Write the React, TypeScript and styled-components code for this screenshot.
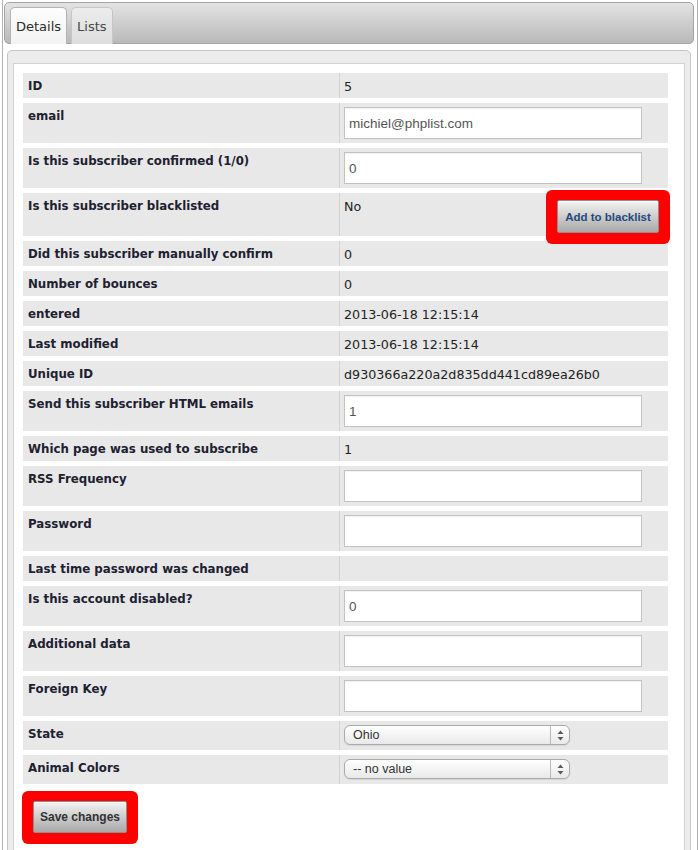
import { styled, createGlobalStyle } from "styled-components"

type Kind = "text" | "input" | "select" | "blacklist"

interface Field {
  label: string
  kind: Kind
  value: string
}

const fields: Field[] = [
  { label: "ID", kind: "text", value: "5" },
  { label: "email", kind: "input", value: "michiel@phplist.com" },
  { label: "Is this subscriber confirmed (1/0)", kind: "input", value: "0" },
  { label: "Is this subscriber blacklisted", kind: "blacklist", value: "No" },
  { label: "Did this subscriber manually confirm", kind: "text", value: "0" },
  { label: "Number of bounces", kind: "text", value: "0" },
  { label: "entered", kind: "text", value: "2013-06-18 12:15:14" },
  { label: "Last modified", kind: "text", value: "2013-06-18 12:15:14" },
  { label: "Unique ID", kind: "text", value: "d930366a220a2d835dd441cd89ea26b0" },
  { label: "Send this subscriber HTML emails", kind: "input", value: "1" },
  { label: "Which page was used to subscribe", kind: "text", value: "1" },
  { label: "RSS Frequency", kind: "input", value: "" },
  { label: "Password", kind: "input", value: "" },
  { label: "Last time password was changed", kind: "text", value: "" },
  { label: "Is this account disabled?", kind: "input", value: "0" },
  { label: "Additional data", kind: "input", value: "" },
  { label: "Foreign Key", kind: "input", value: "" },
  { label: "State", kind: "select", value: "Ohio" },
  { label: "Animal Colors", kind: "select", value: "-- no value" }
]

function SelectArrows() {
  return (
    <svg width="7" height="11" viewBox="0 0 7 11">
      <polygon points="3.5,0.5 6.5,4 0.5,4" fill="#5a5a5a" />
      <polygon points="0.5,7 6.5,7 3.5,10.5" fill="#5a5a5a" />
    </svg>
  )
}

function renderValue(field: Field) {
  switch (field.kind) {
    case "input":
      return (
        <Value $kind="input">
          <TextInput defaultValue={field.value} />
        </Value>
      )
    case "select":
      return (
        <Value $kind="select">
          <SelectBox>
            <SelectText>{field.value}</SelectText>
            <ArrowPart>
              <SelectArrows />
            </ArrowPart>
          </SelectBox>
        </Value>
      )
    case "blacklist":
      return (
        <Value $kind="blacklist">
          <span>{field.value}</span>
          <Highlight>
            <AddButton>Add to blacklist</AddButton>
          </Highlight>
        </Value>
      )
    default:
      return <Value $kind="text">{field.value}</Value>
  }
}

function App() {
  return (
    <>
      <GlobalStyle />
      <Frame>
        <TabBar>
          <Tab $active>Details</Tab>
          <Tab>Lists</Tab>
        </TabBar>
        <Panel>
          <Inner>
            <Rows>
              {fields.map((field) => (
                <Row key={field.label}>
                  <Label>{field.label}</Label>
                  {renderValue(field)}
                </Row>
              ))}
            </Rows>
            <SaveArea>
              <Highlight>
                <SaveButton>Save changes</SaveButton>
              </Highlight>
            </SaveArea>
          </Inner>
        </Panel>
      </Frame>
    </>
  )
}

export default App

const GlobalStyle = createGlobalStyle`
  html, body {
    margin: 0;
    padding: 0;
    background: #fff;
  }
  body {
    font-family: "DejaVu Sans", Verdana, sans-serif;
    color: #222;
  }
  * {
    box-sizing: border-box;
  }
`

const Frame = styled.div`
  margin-left: 2px;
  width: 696px;
  min-height: 900px;
  padding-top: 2px;
  border-left: 1px solid #b2b2b2;
  border-right: 1px solid #b2b2b2;
  display: flex;
  flex-direction: column;
`

const TabBar = styled.div`
  height: 42px;
  margin: 0 3px 0 1px;
  padding-left: 5px;
  border: 1px solid #a4a4a4;
  border-radius: 5px;
  background: linear-gradient(#e3e3e3, #b9b9b9);
  display: flex;
  flex-direction: row;
  align-items: flex-end;
  gap: 4px;
`

const Tab = styled.div<{ $active?: boolean }>`
  height: 37px;
  margin-bottom: -1px;
  padding: 0 5px;
  display: flex;
  align-items: center;
  font-size: 13px;
  color: ${(p) => (p.$active ? "#2a2a2a" : "#474747")};
  background: ${(p) =>
    p.$active
      ? "linear-gradient(#fdfdfd, #f3f3f3)"
      : "linear-gradient(#ececec, #dddddd)"};
  border: 1px solid ${(p) => (p.$active ? "#b4b4b4" : "#c6c6c6")};
  border-bottom: none;
  border-radius: 5px 5px 0 0;
`

const Panel = styled.div`
  flex: 1;
  margin: 6px 6px 0 4px;
  padding: 12px 5px 0 5px;
  border: 1px solid #c6c6c6;
  border-radius: 5px;
  background: #ececec;
  display: flex;
  flex-direction: column;
`

const Inner = styled.div`
  flex: 1;
  background: #fff;
  border: 1px solid #d2d2d2;
  padding: 9px 16px 40px 9px;
`

const Rows = styled.div`
  display: flex;
  flex-direction: column;
  gap: 5px;
`

const Row = styled.div`
  display: grid;
  grid-template-columns: 316px 328px;
  background: #e8e8e8;
`

const Label = styled.div`
  padding: 7px 5px 5px 5px;
  font-size: 11.8px;
  line-height: 13px;
  font-weight: bold;
  color: #1d2130;
`

const valuePadding: Record<Kind, string> = {
  text: "7px 4px 5px 4px",
  input: "4px 4px",
  select: "4px 4px 5px 4px",
  blacklist: "7px 8px 3px 4px"
}

const Value = styled.div<{ $kind: Kind }>`
  border-left: 1px solid #d3d3d3;
  padding: ${(p) => valuePadding[p.$kind]};
  font-size: 12.7px;
  line-height: 13px;
  color: #222;
  display: flex;
  flex-direction: row;
  align-items: flex-start;
  justify-content: space-between;
`

const TextInput = styled.input`
  display: block;
  width: 298px;
  height: 32px;
  margin: 0;
  padding: 0 4px;
  border: 1px solid #c3c3c3;
  box-shadow: inset 0 1px 1px rgba(0, 0, 0, 0.06);
  background: #fff;
  font-family: "Liberation Sans", Arial, sans-serif;
  font-size: 13.5px;
  color: #555;
  outline: none;
`

const SelectBox = styled.div`
  width: 226px;
  height: 20px;
  border: 1px solid #aaaaaa;
  border-radius: 6px;
  background: linear-gradient(#ffffff, #e9e9e9);
  display: flex;
  flex-direction: row;
  align-items: center;
  box-shadow: 0 1px 1px rgba(0, 0, 0, 0.08);
`

const SelectText = styled.span`
  flex: 1;
  padding-left: 8px;
  font-family: "Liberation Sans", Arial, sans-serif;
  font-size: 12.5px;
  color: #333;
`

const ArrowPart = styled.span`
  width: 19px;
  height: 100%;
  border-left: 1px solid #b8b8b8;
  display: flex;
  align-items: center;
  justify-content: center;
`

const Highlight = styled.span`
  position: relative;
  z-index: 1;
  display: inline-flex;
  padding: 10px 11px 11px 11px;
  margin: -10px -11px -11px -11px;
  background: #ff0000;
  border-radius: 6px;
`

const buttonBase = `
  margin: 0;
  padding: 0;
  white-space: nowrap;
  border: 1px solid #8e8e8e;
  border-radius: 2px;
  background: linear-gradient(#f3f3f3, #a8a8a8);
  box-shadow: inset 0 1px 0 rgba(255, 255, 255, 0.7);
  font-family: "Liberation Sans", Arial, sans-serif;
  font-weight: bold;
  cursor: pointer;
`

const AddButton = styled.button`
  ${buttonBase}
  width: 102px;
  height: 33px;
  font-size: 11.5px;
  color: #244a7c;
`

const SaveButton = styled.button`
  ${buttonBase}
  width: 94px;
  height: 32px;
  font-size: 12px;
  color: #333;
`

const SaveArea = styled.div`
  padding: 17px 0 0 10px;
  display: flex;
`
